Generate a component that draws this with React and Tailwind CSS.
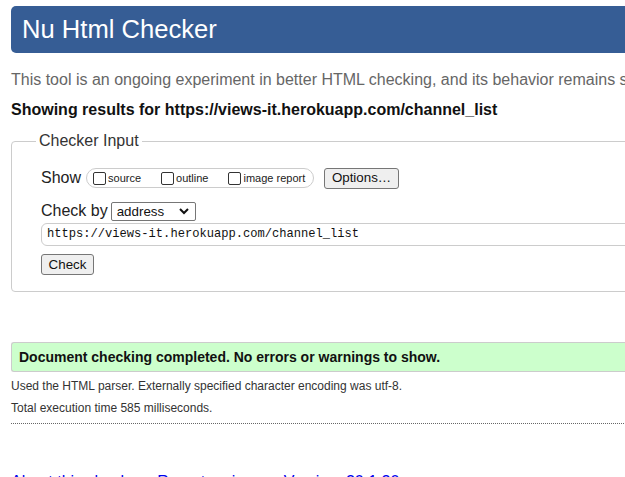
function CheckOption({ label }) {
  return (
    <label className="flex items-center">
      <span className="w-[13px] h-[13px] border border-[#333] rounded-[2px] bg-white mr-[2px]" />
      <span className="text-[11px] text-[#222]">{label}</span>
    </label>
  )
}

export default function App() {
  return (
    <div className="w-[625px] h-[477px] overflow-hidden bg-white font-['Liberation_Sans',Arial,sans-serif] text-[#222]">
      <div className="w-[900px] pl-[11px] pt-[6px]">
        <h1 className="h-[47px] bg-[#365d95] rounded-l-[5px] text-white text-[25.6px] leading-[47px] pl-[11px]">
          Nu Html Checker
        </h1>

        <p className="mt-[18px] text-[16px] leading-[18px] text-[#666] whitespace-nowrap">
          This tool is an ongoing experiment in better HTML checking, and its behavior remains subject to change
        </p>

        <p className="mt-[12px] text-[16px] leading-[18px] font-bold text-[#111] whitespace-nowrap">
          Showing results for https://views-it.herokuapp.com/channel_list
        </p>

        <fieldset className="mt-[13px] border border-[#ccc] rounded-l-[4px] h-[160px] pl-[29px] pt-[17px]">
          <legend className="-ml-[5px] px-[3px] text-[16px] leading-[18px] text-[#333]">Checker Input</legend>

          <div className="flex items-center h-[22px]">
            <span className="text-[16px] mr-[5px] text-[#222]">Show</span>
            <div className="flex items-center gap-[20px] h-[20px] w-[228px] border border-[#ccc] rounded-full pl-[6px]">
              <CheckOption label="source" />
              <CheckOption label="outline" />
              <CheckOption label="image report" />
            </div>
            <button className="ml-[10px] h-[21px] w-[75px] border border-[#767676] rounded-[3px] bg-[#efefef] text-[13.33px] text-[#111] leading-none">
              Options…
            </button>
          </div>

          <div className="flex items-center mt-[12px] h-[20px]">
            <span className="text-[16px] mr-[3px] text-[#222]">Check by</span>
            <div className="relative w-[85px] h-[19px] border border-[#767676] rounded-[2px] bg-white">
              <span className="absolute left-[5px] top-0 text-[13.33px] leading-[17px] text-[#111]">address</span>
              <svg className="absolute right-[6px] top-[5px]" width="10" height="7" viewBox="0 0 10 7">
                <path d="M1 1l4 4 4-4" fill="none" stroke="#111" strokeWidth="2" />
              </svg>
            </div>
          </div>

          <div className="mt-[2px] h-[23px] border border-[#ccc] rounded-l-[6px] pl-[5px] flex items-center">
            <span className="font-['Liberation_Mono',monospace] text-[12.1px] text-[#111]">
              https://views-it.herokuapp.com/channel_list
            </span>
          </div>

          <button className="mt-[8px] h-[21px] w-[53px] border border-[#767676] rounded-[3px] bg-[#efefef] text-[13.33px] text-[#111] leading-none">
            Check
          </button>
        </fieldset>

        <div className="mt-[50px] h-[30px] bg-[#ccffcc] border-y border-l border-[#ccc] rounded-l-[3px] pl-[7px] flex items-center">
          <span className="font-bold text-[14px] text-[#111]">
            Document checking completed. No errors or warnings to show.
          </span>
        </div>

        <p className="mt-[7px] text-[12px] leading-[14px] text-[#333]">
          Used the HTML parser. Externally specified character encoding was utf-8.
        </p>
        <p className="mt-[8px] text-[12px] leading-[14px] text-[#333]">
          Total execution time 585 milliseconds.
        </p>

        <div className="mt-[8px] border-t border-dotted border-[#666]" />

        <p className="mt-[49px] text-[16px] leading-[18px] text-[#0000ee] whitespace-nowrap">
          <a>About this checker</a> • <a>Report an issue</a> • Version: 20.1.20
        </p>
      </div>
    </div>
  )
}
